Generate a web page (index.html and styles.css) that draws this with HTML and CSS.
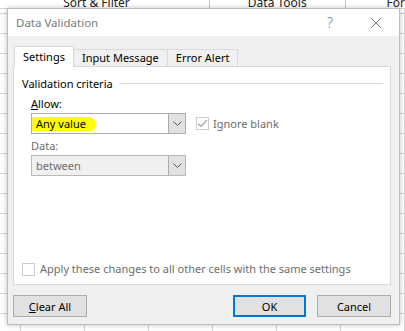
FILE: index.html
```html
<!DOCTYPE html>
<html>
<head>
	<meta charset="utf-8">
	<title>Data Validation</title>
	<link rel="stylesheet" href="styles.css">
</head>
<body>

<div class="sheet">
	<div class="ribbon">
		<span class="grp grp-sort">Sort &amp; Filter</span>
		<span class="grp grp-tools">Data Tools</span>
		<span class="grp grp-for">For</span>
	</div>

	<div class="dialog">
		<div class="titlebar">
			<span class="title">Data Validation</span>
			<span class="tb-btn help">?</span>
			<span class="tb-btn close">
				<svg width="12" height="12" viewBox="0 0 12 12"><path d="M1 1 L11 11 M11 1 L1 11" stroke="#7a7a7a" stroke-width="1" fill="none"/></svg>
			</span>
		</div>

		<div class="body">
			<div class="tabs">
				<div class="tab active">Settings</div>
				<div class="tab">Input Message</div>
				<div class="tab last">Error Alert</div>
			</div>

			<div class="panel">
				<div class="legend">
					<span>Validation criteria</span>
					<span class="legend-line"></span>
				</div>

				<div class="field">
					<div class="label"><u>A</u>llow:</div>
					<div class="row">
						<div class="select">
							<span class="value"><span class="marker">Any value</span></span>
							<span class="arrow">
								<svg width="9" height="5" viewBox="0 0 9 5"><polyline points="0.5,0.5 4.5,4.5 8.5,0.5" stroke="#555" stroke-width="1" fill="none"/></svg>
							</span>
						</div>
						<label class="check disabled">
							<span class="box">
								<svg width="11" height="9" viewBox="0 0 11 9"><polyline points="1,4.5 4,7.5 10,1" stroke="#a0a0a0" stroke-width="1.2" fill="none"/></svg>
							</span>
							<span>Ignore blank</span>
						</label>
					</div>
				</div>

				<div class="field">
					<div class="label disabled">Data:</div>
					<div class="select off">
						<span class="value">between</span>
						<span class="arrow">
							<svg width="9" height="5" viewBox="0 0 9 5"><polyline points="0.5,0.5 4.5,4.5 8.5,0.5" stroke="#555" stroke-width="1" fill="none"/></svg>
						</span>
					</div>
				</div>

				<label class="check apply disabled">
					<span class="box"></span>
					<span>Apply these changes to all other cells with the same settings</span>
				</label>
			</div>

			<div class="buttons">
				<button class="btn"><u>C</u>lear All</button>
				<button class="btn ok">OK</button>
				<button class="btn">Cancel</button>
			</div>
		</div>
	</div>
</div>

</body>
</html>
```

FILE: styles.css
```css
/* spreadsheet behind the dialog */
body {
	margin: 0;
	padding: 0;
	font-family: "Noto Sans", "Open Sans", sans-serif;
	font-size: 11px;
}
.sheet {
	position: relative;
	width: 405px;
	height: 331px;
	overflow: hidden;
	background-color: #fff;
	background-image:
		linear-gradient(to right, #d4d4d4 1px, transparent 1px),
		linear-gradient(to bottom, #d4d4d4 1px, transparent 1px);
	background-size: 64px 100%, 100% 20px;
	background-position: 20px 0, 0 13px;
}
.ribbon {
	height: 8px;
	overflow: hidden;
	display: flex;
	background: #fff;
	border-bottom: 1px solid #d4d4d4;
}
.grp {
	box-sizing: border-box;
	font-size: 12px;
	line-height: 13px;
	margin-top: -4px;
	color: #222;
	text-align: center;
	border-right: 1px solid #c8c8c8;
}
.grp-sort {
	width: 212px;
	padding-right: 16px;
}
.grp-tools {
	width: 137px;
}
.grp-for {
	border-right: none;
	padding-left: 41px;
}

/* dialog window */
.dialog {
	position: absolute;
	left: 7px;
	top: 8px;
	width: 393px;
	height: 317px;
	box-sizing: border-box;
	border: 1px solid #bdbdbd;
	background: #f0f0f0;
	box-shadow: 0 0 5px rgba(0, 0, 0, 0.25);
	display: flex;
	flex-direction: column;
}
.titlebar {
	height: 27px;
	background: #fff;
	display: flex;
	align-items: center;
	padding-left: 8px;
	color: #7a7a7a;
}
.title {
	font-size: 11.5px;
	flex: 1;
}
.tb-btn {
	width: 46px;
	height: 27px;
	display: flex;
	align-items: center;
	justify-content: center;
}
.help {
	font-size: 14px;
	font-weight: 300;
}
.body {
	flex: 1;
	display: flex;
	flex-direction: column;
	padding: 10px 8px 7px 5px;
}

/* tabs */
.tabs {
	height: 20px;
	display: flex;
	align-items: flex-end;
	padding-left: 1px;
}
.tab {
	height: 17px;
	box-sizing: border-box;
	border: 1px solid #d9d9d9;
	border-bottom: none;
	border-right: none;
	padding: 0 8px;
	line-height: 16px;
	color: #000;
	background: #f0f0f0;
}
.tab.last {
	border-right: 1px solid #d9d9d9;
}
.tab.active {
	height: 21px;
	margin-bottom: -1px;
	background: #fff;
	border-right: 1px solid #d9d9d9;
	position: relative;
	z-index: 1;
	padding-top: 2px;
	width: 60px;
	text-align: center;
	padding-left: 0;
	padding-right: 0;
}
.tab.active + .tab {
	border-left: none;
}

/* settings panel */
.panel {
	flex: 1;
	background: #fff;
	border: 1px solid #d9d9d9;
	display: flex;
	flex-direction: column;
	padding: 9px 7px 7px 8px;
}
.legend {
	display: flex;
	align-items: center;
	height: 16px;
	line-height: 16px;
	color: #000;
}
.legend-line {
	flex: 1;
	height: 1px;
	background: #dcdcdc;
	margin-left: 6px;
	margin-top: -1px;
}
.field {
	margin-left: 9px;
	margin-top: 4px;
}
.label {
	height: 16px;
	line-height: 16px;
	margin-bottom: 1px;
}
.disabled {
	color: #6d6d6d;
}
.row {
	display: flex;
	align-items: center;
}
.select {
	width: 155px;
	height: 21px;
	box-sizing: border-box;
	border: 1px solid #acacac;
	background: #fff;
	display: flex;
}
.select.off {
	background: #f0f0f0;
	border-color: #b8b8b8;
	color: #6d6d6d;
}
.value {
	flex: 1;
	line-height: 19px;
}
.select.off .value {
	padding-left: 4px;
}
.marker {
	display: inline-block;
	background: #ffff00;
	padding: 0 10px 0 4px;
	line-height: 14px;
	margin-top: 2px;
	border-radius: 2px 8px 6px 2px;
}
.arrow {
	width: 16px;
	background: #e1e1e1;
	border-left: 1px solid #acacac;
	display: flex;
	align-items: center;
	justify-content: center;
}
.check {
	display: flex;
	align-items: center;
	margin-left: 10px;
}
.box {
	width: 13px;
	height: 13px;
	box-sizing: border-box;
	border: 1px solid #cccccc;
	background: #fff;
	margin-right: 4px;
	display: flex;
	align-items: center;
	justify-content: center;
}
.apply {
	margin-top: auto;
	margin-left: 0;
	line-height: 16px;
}
.apply .box {
	margin-right: 5px;
}

/* bottom buttons */
.buttons {
	display: flex;
	margin-top: 10px;
	gap: 11px;
}
.btn {
	width: 74px;
	height: 22px;
	box-sizing: border-box;
	border: 1px solid #adadad;
	background: #e1e1e1;
	font-family: "Noto Sans", "Open Sans", sans-serif;
	font-size: 11px;
	color: #000;
	padding: 0;
}
.btn.ok {
	margin-left: auto;
	width: 73px;
	border: 2px solid #0078d7;
}
```
